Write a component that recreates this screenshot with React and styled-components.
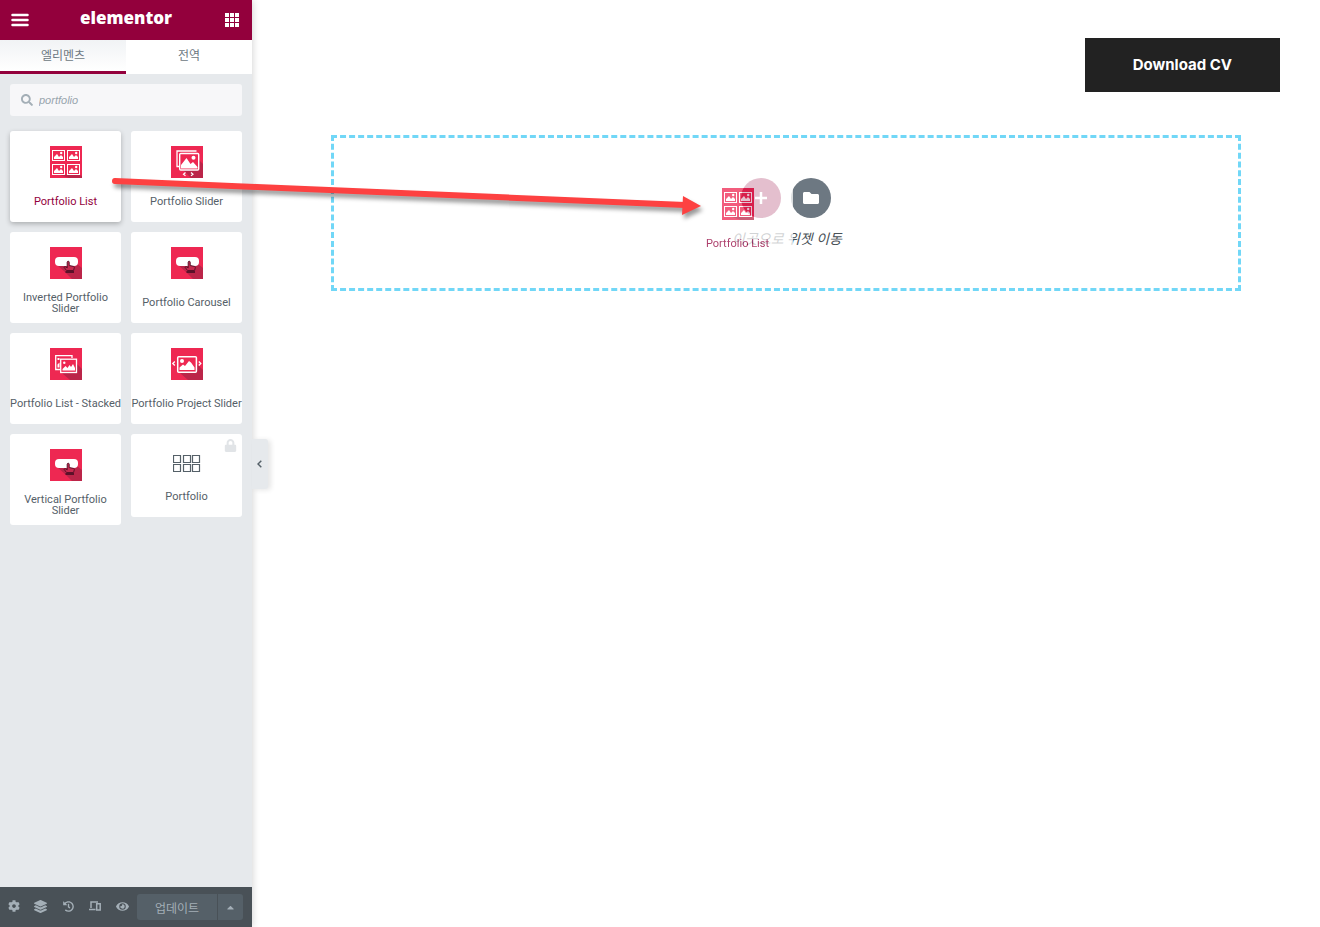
import React from 'react'
import styled, { createGlobalStyle } from 'styled-components'
import { FaCog, FaLayerGroup, FaHistory, FaEye, FaFolder, FaLock, FaSearch, FaCaretUp } from 'react-icons/fa'

const GlobalStyle = createGlobalStyle`
    * {
        box-sizing: border-box;
    }

    body {
        margin: 0;
        background: #fff;
        color: #556068;
        font-family: Roboto, "Noto Sans CJK KR", sans-serif;
        font-size: 11px;
    }

    button, input {
        font-family: inherit;
        border: 0;
        padding: 0;
    }
`

const Editor = styled.div`
    position: relative;
    display: flex;
    min-height: 100vh;
    overflow: hidden;
`

const Panel = styled.aside`
    position: relative;
    z-index: 1;
    display: flex;
    flex-direction: column;
    flex: 0 0 252px;
    background: #e6e9ec;
    box-shadow: 0 0 8px rgba(0, 0, 0, 0.2);
`

const PanelHeader = styled.header`
    display: flex;
    align-items: center;
    justify-content: space-between;
    height: 40px;
    background: #93003c;
`

const HeaderButton = styled.button`
    display: flex;
    align-items: center;
    justify-content: center;
    width: 40px;
    height: 40px;
    background: transparent;
    color: #fff;
`

const Logo = styled.h1`
    margin: 0;
    padding-bottom: 4px;
    color: #fff;
    font-family: "Open Sans", sans-serif;
    font-size: 17px;
    font-weight: 800;
    line-height: 20px;
`

const Tabs = styled.nav`
    display: flex;
`

const Tab = styled.button`
    flex: 1;
    height: 34px;
    padding-bottom: 2px;
    border-bottom: 3px solid ${props => props.$active ? '#93003c' : '#fff'};
    background: ${props => props.$active ? 'linear-gradient(#f1f3f5, #fff)' : '#fff'};
    color: #6d7882;
    font-size: 12px;
`

const SearchBox = styled.label`
    display: flex;
    align-items: center;
    gap: 6px;
    height: 32px;
    margin: 10px 10px 15px;
    padding: 0 11px;
    border-radius: 3px;
    background: #f7f7f9;
    color: #a4afb7;
`

const SearchInput = styled.input`
    flex: 1;
    min-width: 0;
    background: transparent;
    color: #98a4ad;
    font-family: "Liberation Sans", sans-serif;
    font-size: 11px;
    font-style: italic;
    outline: none;
`

const Widgets = styled.div`
    display: grid;
    grid-template-columns: 1fr 1fr;
    align-items: start;
    gap: 10px;
    flex: 1;
    align-content: start;
    padding: 0 10px;
`

const Tile = styled.button`
    position: relative;
    display: flex;
    flex-direction: column;
    align-items: center;
    min-width: 0;
    padding: 15px 0 1px;
    border-radius: 3px;
    background: #fff;
    color: ${props => props.$active ? '#93003c' : '#556068'};
    box-shadow: ${props => props.$raised ? '0 2px 5px rgba(0, 0, 0, 0.25)' : 'none'};
`

const TileIcon = styled.span`
    display: block;
    height: ${props => props.$small ? '28px' : '36px'};

    svg {
        display: block;
    }
`

const TileLabel = styled.span`
    display: flex;
    align-items: center;
    justify-content: center;
    height: 39px;
    font-size: 11px;
    line-height: 11px;
    text-align: center;
    white-space: pre;
`

const LockBadge = styled.span`
    position: absolute;
    top: 5px;
    right: 5px;
    color: #e1e4e7;
`

const PanelFooter = styled.footer`
    display: flex;
    align-items: center;
    height: 40px;
    padding-right: 9px;
    background: #495157;
`

const Tools = styled.div`
    display: flex;
    flex: 1;
    padding: 0 1px 2px 0;
`

const ToolButton = styled.button`
    display: flex;
    flex: 1;
    align-items: center;
    justify-content: center;
    height: 36px;
    background: transparent;
    color: #a4afb7;
`

const UpdateButton = styled.button`
    width: 80px;
    height: 26px;
    border-radius: 3px 0 0 3px;
    background: #556068;
    color: #a4afb7;
    font-size: 12px;
`

const OptionsButton = styled.button`
    display: flex;
    align-items: center;
    justify-content: center;
    width: 25px;
    height: 26px;
    margin-left: 1px;
    border-radius: 0 3px 3px 0;
    background: #556068;
    color: #a4afb7;
`

const CollapseButton = styled.button`
    position: absolute;
    top: 50%;
    left: 100%;
    display: flex;
    align-items: center;
    justify-content: center;
    width: 16px;
    height: 50px;
    padding-right: 2px;
    transform: translateY(-50%);
    border-radius: 0 3px 3px 0;
    background: #e6e9ec;
    color: #556068;
    box-shadow: 3px 1px 5px rgba(0, 0, 0, 0.1);
`

const Preview = styled.main`
    flex: 1;
    min-width: 0;
`

const PageHeader = styled.div`
    display: flex;
    justify-content: flex-end;
    padding: 38px 40px 43px;
`

const DownloadLink = styled.a`
    padding: 0 48px;
    background: #222;
    color: #fff;
    font-family: Inter, sans-serif;
    font-size: 15px;
    font-weight: 700;
    line-height: 54px;
    text-decoration: none;
`

const DropArea = styled.section`
    position: relative;
    display: flex;
    flex-direction: column;
    align-items: center;
    margin: 0 79px;
    padding: 40px 0 39px;
    border: 3px dashed #71d7f7;
`

const AddButtons = styled.div`
    display: flex;
    gap: 10px;
`

const RoundButton = styled.button`
    display: flex;
    align-items: center;
    justify-content: center;
    width: 40px;
    height: 40px;
    border-radius: 50%;
    background: ${props => props.$primary ? '#93003c' : '#6d7882'};
    color: #fff;
`

const DropHint = styled.p`
    margin: 11px 0 0;
    padding-left: 2px;
    color: #495157;
    font-size: 14px;
    font-style: italic;
    line-height: 20px;
`

const Ghost = styled.div`
    position: absolute;
    top: 35px;
    left: calc(50% - 104px);
    display: grid;
    width: 111px;
    opacity: 0.75;
`

const Arrow = styled.svg`
    position: absolute;
    z-index: 2;
    top: 170px;
    left: 105px;
    pointer-events: none;
    filter: drop-shadow(2px 4px 2px rgba(0, 0, 0, 0.4));
`

const PINK = '#ee2852'
const SHADE = '#bb2549'

function Picture({ x, y }) {
  return (
    <g transform={`translate(${x} ${y})`}>
      <rect x="0.5" y="0.5" width="12" height="10" fill={PINK} stroke="#fff" />
      <path d="M2 9V7l3-3 2 3 2-2 2 2v2z" fill="#fff" />
      <circle cx="9.2" cy="3" r="1.2" fill="#fff" />
    </g>
  )
}

function ListIcon() {
  return (
    <svg width="32" height="32" viewBox="0 0 32 32">
      <path d="M0 0h32v32H0z" fill={PINK} />
      <path d="M10 29h20l2 1v2H19z" fill={SHADE} />
      <Picture x={2} y={4} />
      <Picture x={17} y={4} />
      <Picture x={2} y={18} />
      <Picture x={17} y={18} />
    </svg>
  )
}

function SliderIcon() {
  return (
    <svg width="32" height="32" viewBox="0 0 32 32">
      <path d="M0 0h32v32H0z" fill={PINK} />
      <path d="M28 14l4 4v14H20l-8-8z" fill={SHADE} />
      <path d="M25.5 5H6v15.5h2" fill="none" stroke="#fff" strokeWidth="1.3" />
      <rect x="8.7" y="7.5" width="19" height="16.5" rx="1" fill={PINK} stroke="#fff" strokeWidth="1.4" />
      <path d="M10 22.5V19l5.500-7 4 6 2.500-2 4.500 5v1.500z" fill="#fff" />
      <circle cx="22.5" cy="11.8" r="2" fill="#fff" />
      <path d="M14.5 26.500l-2 1.700 2 1.700M20 26.500l2 1.700-2 1.700" fill="none" stroke="#fff" strokeWidth="1.2" />
    </svg>
  )
}

function ButtonIcon() {
  return (
    <svg width="32" height="32" viewBox="0 0 32 32">
      <path d="M0 0h32v32H0z" fill={PINK} />
      <path d="M27 17l5 4v11H22l-7-7-8-7z" fill={SHADE} />
      <rect x="5" y="10" width="23" height="9" rx="4" fill="#fff" />
      <path d="M17.2 15.200c0-1.300 2-1.300 2 0v3.300l4.300.9c.7.200.9.600.8 1.300l-.7 2.800h-7.100l-2.500-3.300c.4-.8 1.500-.7 3.200.7z" fill="#c62b4f" stroke="#5c1129" />
      <path d="M15.500 24h8.500v2h-8.500z" fill="#5c1129" />
    </svg>
  )
}

function StackedIcon() {
  return (
    <svg width="32" height="32" viewBox="0 0 32 32">
      <path d="M0 0h32v32H0z" fill={PINK} />
      <path d="M27 16l5 5v11H20l-8-7z" fill={SHADE} />
      <path d="M22 10V7.7H5.700V21.500H10" fill="none" stroke="#fff" strokeWidth="1.3" />
      <path d="M7.500 19.500v-3l2-2v5zM7.500 10h2v2h-2z" fill="#fff" />
      <rect x="10.7" y="11.2" width="15.8" height="13.3" fill={PINK} stroke="#fff" strokeWidth="1.3" />
      <path d="M12.500 22.500V21l3-3 2 2 2-3 1.500 2 2-3 2 4v2.500z" fill="#fff" />
      <circle cx="14.3" cy="14.8" r="1.2" fill="#fff" />
    </svg>
  )
}

function ProjectIcon() {
  return (
    <svg width="32" height="32" viewBox="0 0 32 32">
      <path d="M0 0h32v32H0z" fill={PINK} />
      <path d="M26 16l6 6v10H17l-8-7z" fill={SHADE} />
      <rect x="6.7" y="8.7" width="18.700" height="15.500" rx="1" fill={PINK} stroke="#fff" strokeWidth="1.5" />
      <path d="M8.500 22v-2.500l3.500-3 2 1.500 4-5 2 1.500 3.500 5V22z" fill="#fff" />
      <circle cx="11" cy="13" r="2" fill="#fff" />
      <path d="M3.800 13.500l-2 2 2 2M27.800 13.500l2 2-2 2" fill="none" stroke="#fff" strokeWidth="1.3" />
    </svg>
  )
}

function GalleryIcon() {
  return (
    <svg width="28" height="28" viewBox="0 0 28 28" fill="none" stroke="#556068" strokeWidth="1.2">
      <path d="M.5 6.500h7v7h-7zM10.500 6.500h7v7h-7zM19.500 6.500h7v7h-7zM.5 15.500h7v7h-7zM10.500 15.500h7v7h-7zM19.500 15.500h7v7h-7z" />
    </svg>
  )
}

const widgets = [
  { label: 'Portfolio List', icon: <ListIcon />, active: true },
  { label: 'Portfolio Slider', icon: <SliderIcon /> },
  { label: 'Inverted Portfolio\nSlider', icon: <ButtonIcon /> },
  { label: 'Portfolio Carousel', icon: <ButtonIcon /> },
  { label: 'Portfolio List - Stacked', icon: <StackedIcon /> },
  { label: 'Portfolio Project Slider', icon: <ProjectIcon /> },
  { label: 'Vertical Portfolio\nSlider', icon: <ButtonIcon /> },
  { label: 'Portfolio', icon: <GalleryIcon />, locked: true },
]

function App() {
  return (
    <Editor>
      <GlobalStyle />
      <Panel>
        <PanelHeader>
          <HeaderButton aria-label="Menu">
            <svg width="18" height="14" viewBox="0 0 18 14" fill="none" stroke="#fff" strokeWidth="2.5" strokeLinecap="round">
              <path d="M1.500 2h15M1.500 7h15M1.500 12h15" />
            </svg>
          </HeaderButton>
          <Logo>elementor</Logo>
          <HeaderButton aria-label="Widgets">
            <svg width="14" height="14" viewBox="0 0 14 14" fill="#fff">
              <path d="M0 0h4v4H0zM5 0h4v4H5zM10 0h4v4h-4zM0 5h4v4H0zM5 5h4v4H5zM10 5h4v4h-4zM0 10h4v4H0zM5 10h4v4H5zM10 10h4v4h-4z" />
            </svg>
          </HeaderButton>
        </PanelHeader>
        <Tabs>
          <Tab $active>엘리멘츠</Tab>
          <Tab>전역</Tab>
        </Tabs>
        <SearchBox>
          <FaSearch size={12} />
          <SearchInput type="text" aria-label="Search widgets" defaultValue="portfolio" />
        </SearchBox>
        <Widgets>
          {widgets.map(({ label, icon, active, locked }) => (
            <Tile key={label} $active={active} $raised={active}>
              <TileIcon $small={locked}>{icon}</TileIcon>
              <TileLabel>{label}</TileLabel>
              {locked && <LockBadge><FaLock size={13} /></LockBadge>}
            </Tile>
          ))}
        </Widgets>
        <PanelFooter>
          <Tools>
            <ToolButton aria-label="Settings"><FaCog size={12} /></ToolButton>
            <ToolButton aria-label="Navigator"><FaLayerGroup size={13} /></ToolButton>
            <ToolButton aria-label="History"><FaHistory size={11} /></ToolButton>
            <ToolButton aria-label="Responsive mode">
              <svg width="12" height="10" viewBox="0 0 12 10" fill="none" stroke="currentColor" strokeWidth="1.5">
                <path d="M2 7V1h7M0 8.500h6.500M7.700 2.700h3.500v6.300H7.700z" />
              </svg>
            </ToolButton>
            <ToolButton aria-label="Preview"><FaEye size={13} /></ToolButton>
          </Tools>
          <UpdateButton>업데이트</UpdateButton>
          <OptionsButton aria-label="Save options"><FaCaretUp size={11} /></OptionsButton>
        </PanelFooter>
        <CollapseButton aria-label="Collapse panel">
          <svg width="5" height="8" viewBox="0 0 5 8" fill="none" stroke="currentColor" strokeWidth="1.5">
            <path d="M4.300.8L1 4l3.300 3.200" />
          </svg>
        </CollapseButton>
      </Panel>
      <Preview>
        <PageHeader>
          <DownloadLink href="#cv">Download CV</DownloadLink>
        </PageHeader>
        <DropArea>
          <AddButtons>
            <RoundButton $primary aria-label="Add section">
              <svg width="12" height="12" viewBox="0 0 12 12" stroke="#fff" strokeWidth="2.5">
                <path d="M6 0v12M0 6h12" />
              </svg>
            </RoundButton>
            <RoundButton aria-label="Add template"><FaFolder size={16} /></RoundButton>
          </AddButtons>
          <DropHint>이곳으로 위젯 이동</DropHint>
          <Ghost>
            <Tile as="div" $active>
              <TileIcon><ListIcon /></TileIcon>
              <TileLabel>Portfolio List</TileLabel>
            </Tile>
          </Ghost>
        </DropArea>
      </Preview>
      <Arrow width="610" height="60" viewBox="0 0 610 60">
        <path d="M10 11L580 35" stroke="#fd4141" strokeWidth="6" strokeLinecap="round" />
        <path d="M578 26l18 10-19 9z" fill="#fd4141" />
      </Arrow>
    </Editor>
  )
}

export default App
